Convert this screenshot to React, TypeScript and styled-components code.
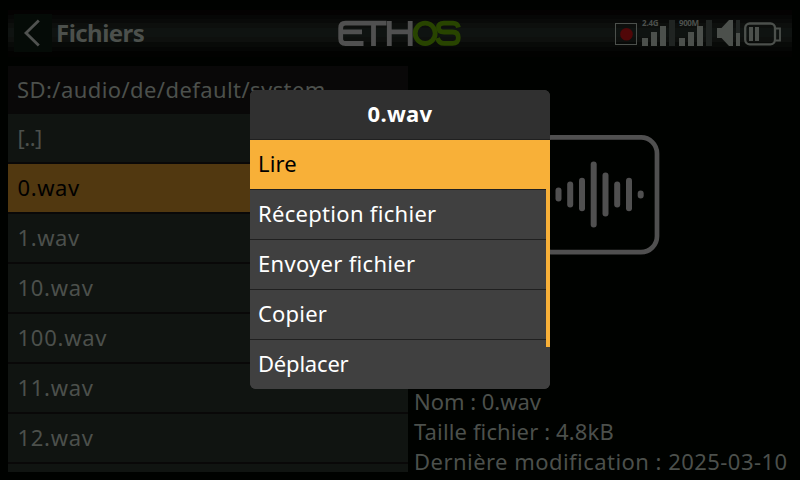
import React from "react";
import styled, { createGlobalStyle } from "styled-components";

const Global = createGlobalStyle`
  * { box-sizing: border-box; }
  body { margin: 0; background: #000200; overflow: hidden; }
`;

const Screen = styled.div`
  position: relative;
  width: 800px;
  height: 480px;
  padding: 0 8px;
  display: flex;
  flex-direction: column;
  overflow: hidden;
  background: #000200;
  color: #4c504c;
  font: 22px/30px "Noto Sans", sans-serif;
  white-space: pre;
`;

const TopBar = styled.header`
  height: 66px;
  flex: none;
  display: grid;
  grid-template-columns: 329px 1fr 178px;
  padding-top: 14px;
  background: linear-gradient(
    #000200 0 10px, #040202 10px 15px, #060706 15px 19px, #090a09 19px 23px,
    #0d0f0d 23px 28px, #0f1311 28px 37px, #0e100e 37px 42px, #080a08 42px 47px,
    #050605 47px 51px, #020201 51px 57px, #000200 57px
  );
`;

const TitleGroup = styled.div`
  display: flex;
  padding-left: 6px;
`;

const BackButton = styled.button`
  width: 38px;
  height: 38px;
  padding: 0;
  border: 0;
  background: #050b07;
  svg { display: block; }
`;

const Title = styled.h1`
  margin: 0 0 0 4px;
  font-size: 24px;
  line-height: 38px;
  font-weight: 700;
  letter-spacing: -0.55px;
`;

const LogoSlot = styled.div`
  padding-top: 6px;
  svg { display: block; }
`;

const Content = styled.main`
  display: flex;
  height: 406px;
`;

const FileList = styled.section`
  width: 400px;
  height: 406px;
  flex: none;
  overflow: hidden;
  display: flex;
  flex-direction: column;
  gap: 2px;
  background: #090808;
`;

const PathRow = styled.div`
  height: 46px;
  flex: none;
  padding: 0 9px;
  line-height: 46px;
  letter-spacing: 0.42px;
`;

const FileRow = styled.div<{ $selected?: boolean; $track: number }>`
  height: 48px;
  flex: none;
  padding: 0 9.5px;
  line-height: 46px;
  letter-spacing: ${(p) => p.$track}px;
  background: ${(p) => (p.$selected ? "#513810" : "#101411")};
  color: ${(p) => (p.$selected ? "#000" : "inherit")};
`;

const Details = styled.section`
  flex: 1;
  padding: 69px 0 0 6px;
  display: flex;
  flex-direction: column;
`;

const Preview = styled.div`
  height: 251px;
  flex: none;
  padding-left: 119px;
  svg { display: block; }
`;

const Info = styled.div<{ $track: number }>`
  height: 30px;
  flex: none;
  letter-spacing: ${(p) => p.$track}px;
`;

const Menu = styled.div`
  position: absolute;
  left: 250px;
  top: 90px;
  width: 300px;
  height: 299px;
  border-radius: 6px;
  overflow: hidden;
  background: #404040;
  color: #fff;
`;

const MenuTitle = styled.div`
  height: 50px;
  line-height: 47px;
  text-align: center;
  font-weight: 700;
  letter-spacing: 0.3px;
  background: #303030;
  border-bottom: 1px solid #202020;
`;

const MenuItem = styled.div<{ $active?: boolean; $track: number }>`
  height: 50px;
  line-height: 47px;
  padding-left: 8px;
  letter-spacing: ${(p) => p.$track}px;
  border-bottom: 1px solid #202020;
  background: ${(p) => (p.$active ? "#f8b038" : "#404040")};
  color: ${(p) => (p.$active ? "#000" : "#fff")};
`;

const ScrollThumb = styled.div`
  position: absolute;
  right: 0;
  top: 50px;
  width: 4px;
  height: 207px;
  background: #f8b038;
`;

const BackIcon = () => (
  <svg width="38" height="38" fill="none" stroke="#505250" strokeWidth="2.8">
    <path d="M24.8 6.5 12 19 24.8 31.5" />
  </svg>
);

const Logo = () => (
  <svg width="126" height="28" fill="none" strokeWidth="4.8">
    <g stroke="#505050">
      <path d="M49.500 3.200H8.500Q3.700 3.200 3.700 8V18.500Q3.700 23.500 8.500 23.500H26.500M3.700 11.800H25M36.500 3V26" />
      <path d="M52.300 1V26M73.200 1V26M52 11.800H73" />
    </g>
    <g stroke="#284400">
      <ellipse cx="88.200" cy="13.300" rx="10" ry="10.200" />
      <path d="M121.500 7.500Q120.500 3.200 116 3.200H107Q101.500 3.200 101.500 7.600T107 12H115.500Q121.300 12 121.300 17.700T115.500 23.400H107Q102 23.400 100.500 18" />
    </g>
  </svg>
);

const StatusIcons = () => (
  <svg width="178" height="38" fill="#4c504c" fontFamily="Noto Sans" fontSize="8" fontWeight="700">
    <rect x="1.500" y="9.500" width="21" height="21" fill="none" stroke="#4c504c" />
    <circle cx="12.500" cy="20.300" r="6.300" fill="#500708" />
    <g transform="translate(1 0)">
      <text x="27" y="12" letterSpacing="-0.2">2.4G</text>
      <path d="M27 24h6v8h-6zM36 18h6v14h-6zM45 12h6v20h-6z" />
      <path d="M54 6h6v26h-6z" fill="#202422" />
      <text x="64" y="12" letterSpacing="-0.4">900M</text>
      <path d="M64 24h6v8h-6zM73 18h6v14h-6zM82 12h6v20h-6z" />
      <path d="M91 6h6v26h-6z" fill="#202422" />
      <path d="M102 14h4.500L114 6h4v26h-4l-7.500-8h-4.500z" />
      <path d="M121 6h4v13h-4z" fill="#202422" />
      <path d="M121 19h4v13h-4z" />
      <rect x="130.200" y="9.500" width="29.800" height="20.800" rx="4.500" fill="none" stroke="#4c504c" strokeWidth="2.300" />
      <path d="M161 14.500h4v12h-4" fill="none" stroke="#4c504c" strokeWidth="1.800" />
      <path d="M134 13h4v14h-4zM140 13h4v14h-4z" />
    </g>
  </svg>
);

const bars = [
  [25.5, 52.5, 66.5], [37.2, 46.5, 72.5], [49, 42.7, 76.3], [60.7, 26.5, 92.5],
  [72.5, 37.5, 81.5], [84.2, 46.5, 72.5], [96, 42.7, 76.3], [107.7, 55.5, 63.5],
];

const WaveIcon = () => (
  <svg width="128" height="120" fill="none" stroke="#505050">
    <rect x="2.500" y="2.400" width="121.500" height="114.800" rx="16" strokeWidth="4.700" />
    <g strokeWidth="6" strokeLinecap="round">
      {bars.map(([x, a, b]) => (
        <path key={x} d={`M${x} ${a + 3}V${b - 3}`} />
      ))}
    </g>
  </svg>
);

const files: [string, number][] = [
  ["[..]", -0.5], ["0.wav", 0.6], ["1.wav", 0.6], ["10.wav", 0.7],
  ["100.wav", 0.75], ["11.wav", 0.7], ["12.wav", 0.7], ["", 0],
];

export default function App() {
  return (
    <Screen>
      <Global />
      <TopBar>
        <TitleGroup>
          <BackButton aria-label="Retour"><BackIcon /></BackButton>
          <Title>Fichiers</Title>
        </TitleGroup>
        <LogoSlot><Logo /></LogoSlot>
        <StatusIcons />
      </TopBar>
      <Content>
        <FileList>
          <PathRow>SD:/audio/de/default/system</PathRow>
          {files.map(([name, track], i) => (
            <FileRow key={i} $selected={i === 1} $track={track}>{name}</FileRow>
          ))}
        </FileList>
        <Details>
          <Preview><WaveIcon /></Preview>
          <Info $track={-0.03}>Nom : 0.wav</Info>
          <Info $track={0.13}>Taille fichier : 4.8kB</Info>
          <Info $track={0.46}>Dernière modification : 2025-03-10</Info>
        </Details>
      </Content>
      <Menu role="dialog">
        <MenuTitle>0.wav</MenuTitle>
        <MenuItem $active $track={0.15}>Lire</MenuItem>
        <MenuItem $track={0.3}>Réception fichier</MenuItem>
        <MenuItem $track={0.3}>Envoyer fichier</MenuItem>
        <MenuItem $track={0.2}>Copier</MenuItem>
        <MenuItem $track={-0.2}>Déplacer</MenuItem>
        <ScrollThumb />
      </Menu>
    </Screen>
  );
}
